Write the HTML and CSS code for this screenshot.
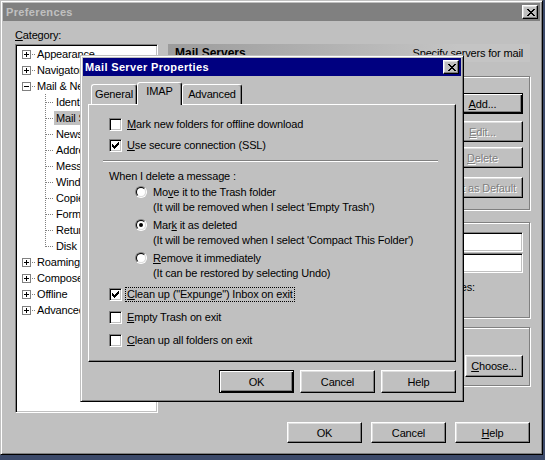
FILE: index.html
```html
<!DOCTYPE html>
<html>
<head>
<meta charset="utf-8">
<title>Preferences</title>
<link rel="stylesheet" href="styles.css">
</head>
<body>
<div class="prefs">
  <div class="titlebar inactive">
    <span class="title-text">Preferences</span>
    <span class="tbtn"><svg viewBox="0 0 8 7" shape-rendering="crispEdges"><path d="M0 0h2v1H0zM6 0h2v1H6zM1 1h2v1H1zM5 1h2v1H5zM2 2h4v1H2zM3 3h2v1H3zM2 4h4v1H2zM1 5h2v1H1zM5 5h2v1H5zM0 6h2v1H0zM6 6h2v1H6z" fill="#000"/></svg></span>
  </div>
  <div class="client">
    <div class="cat-label"><u>C</u>ategory:</div>
    <div class="main">
      <div class="tree">
        <div class="node"><svg class="exp" viewBox="0 0 9 9" shape-rendering="crispEdges"><rect x="0.5" y="0.5" width="8" height="8" fill="#fff" stroke="#808080"/><path d="M2 4h5v1H2zM4 2h1v5H4z" fill="#000"/></svg><span class="dash"></span><span class="tl">Appearance</span></div>
        <div class="node"><svg class="exp" viewBox="0 0 9 9" shape-rendering="crispEdges"><rect x="0.5" y="0.5" width="8" height="8" fill="#fff" stroke="#808080"/><path d="M2 4h5v1H2zM4 2h1v5H4z" fill="#000"/></svg><span class="dash"></span><span class="tl">Navigator</span></div>
        <div class="node"><svg class="exp" viewBox="0 0 9 9" shape-rendering="crispEdges"><rect x="0.5" y="0.5" width="8" height="8" fill="#fff" stroke="#808080"/><path d="M2 4h5v1H2z" fill="#000"/></svg><span class="dash"></span><span class="tl">Mail &amp; Newsgroups</span></div>
        <div class="child"><span class="cl">Identity</span></div>
        <div class="child"><span class="cl sel">Mail Servers</span></div>
        <div class="child"><span class="cl">Newsgroup Servers</span></div>
        <div class="child"><span class="cl">Addressing</span></div>
        <div class="child"><span class="cl">Messages</span></div>
        <div class="child"><span class="cl">Window Settings</span></div>
        <div class="child"><span class="cl">Copies &amp; Folders</span></div>
        <div class="child"><span class="cl">Formatting</span></div>
        <div class="child"><span class="cl">Return Receipts</span></div>
        <div class="child last"><span class="cl">Disk Space</span></div>
        <div class="node"><svg class="exp" viewBox="0 0 9 9" shape-rendering="crispEdges"><rect x="0.5" y="0.5" width="8" height="8" fill="#fff" stroke="#808080"/><path d="M2 4h5v1H2zM4 2h1v5H4z" fill="#000"/></svg><span class="dash"></span><span class="tl">Roaming User</span></div>
        <div class="node"><svg class="exp" viewBox="0 0 9 9" shape-rendering="crispEdges"><rect x="0.5" y="0.5" width="8" height="8" fill="#fff" stroke="#808080"/><path d="M2 4h5v1H2zM4 2h1v5H4z" fill="#000"/></svg><span class="dash"></span><span class="tl">Composer</span></div>
        <div class="node"><svg class="exp" viewBox="0 0 9 9" shape-rendering="crispEdges"><rect x="0.5" y="0.5" width="8" height="8" fill="#fff" stroke="#808080"/><path d="M2 4h5v1H2zM4 2h1v5H4z" fill="#000"/></svg><span class="dash"></span><span class="tl">Offline</span></div>
        <div class="node"><svg class="exp" viewBox="0 0 9 9" shape-rendering="crispEdges"><rect x="0.5" y="0.5" width="8" height="8" fill="#fff" stroke="#808080"/><path d="M2 4h5v1H2zM4 2h1v5H4z" fill="#000"/></svg><span class="dash"></span><span class="tl">Advanced</span></div>
      </div>
      <div class="right">
        <div class="hdr"><span class="hdr-title">Mail Servers</span><span class="hdr-desc">Specify servers for mail</span></div>
        <div class="group g1">
          <div class="btn def gb"><span><u>A</u>dd...</span></div>
          <div class="btn dis gb m7"><span><u>E</u>dit...</span></div>
          <div class="btn dis gb m5"><span><u>D</u>elete</span></div>
          <div class="btn dis gb m9"><span>Set as Default</span></div>
        </div>
        <div class="group g2">
          <div class="field"></div>
          <div class="field f2"></div>
          <div class="es">Outgoing server for all identities:</div>
        </div>
        <div class="group g3">
          <div class="btn choose"><span><u>C</u>hoose...</span></div>
        </div>
      </div>
    </div>
    <div class="footer">
      <div class="btn fb"><span>OK</span></div>
      <div class="btn fb"><span>Cancel</span></div>
      <div class="btn fb"><span><u>H</u>elp</span></div>
    </div>
  </div>
</div>

<div class="dlg">
  <div class="titlebar active">
    <span class="title-text">Mail Server Properties</span>
    <span class="tbtn"><svg viewBox="0 0 8 7" shape-rendering="crispEdges"><path d="M0 0h2v1H0zM6 0h2v1H6zM1 1h2v1H1zM5 1h2v1H5zM2 2h4v1H2zM3 3h2v1H3zM2 4h4v1H2zM1 5h2v1H1zM5 5h2v1H5zM0 6h2v1H0zM6 6h2v1H6z" fill="#000"/></svg></span>
  </div>
  <div class="dlg-body">
    <div class="tabs">
      <div class="tab t-gen">General</div>
      <div class="tab sel t-imap">IMAP</div>
      <div class="tab t-adv">Advanced</div>
    </div>
    <div class="panel">
      <div class="row"><span class="cb"></span><span class="lab"><u>M</u>ark new folders for offline download</span></div>
      <div class="row m5"><span class="cb"><svg viewBox="0 0 7 7" shape-rendering="crispEdges"><path d="M6 0h1v1H6zM5 1h2v1H5zM0 2h1v1H0zM4 2h3v1H4zM0 3h2v1H0zM3 3h3v1H3zM0 4h5v1H0zM1 5h3v1H1zM2 6h1v1H2z" fill="#000"/></svg></span><span class="lab"><u>U</u>se secure connection (SSL)</span></div>
      <div class="sep"></div>
      <div class="row when">When I delete a message :</div>
      <div class="ritem">
        <div class="row"><span class="radio"><span></span></span><span class="rlab">Mo<u>v</u>e it to the Trash folder</span></div>
        <div class="sub">(It will be removed when I select 'Empty Trash')</div>
      </div>
      <div class="ritem">
        <div class="row"><span class="radio"><span><i class="dot"></i></span></span><span class="rlab">Mar<u>k</u> it as deleted</span></div>
        <div class="sub">(It will be removed when I select 'Compact This Folder')</div>
      </div>
      <div class="ritem">
        <div class="row"><span class="radio"><span></span></span><span class="rlab"><u>R</u>emove it immediately</span></div>
        <div class="sub">(It can be restored by selecting Undo)</div>
      </div>
      <div class="row m5"><span class="cb"><svg viewBox="0 0 7 7" shape-rendering="crispEdges"><path d="M6 0h1v1H6zM5 1h2v1H5zM0 2h1v1H0zM4 2h3v1H4zM0 3h2v1H0zM3 3h3v1H3zM0 4h5v1H0zM1 5h3v1H1zM2 6h1v1H2z" fill="#000"/></svg></span><span class="lab focus"><u>C</u>lean up ("Expunge") Inbox on exit</span></div>
      <div class="row m7"><span class="cb"></span><span class="lab"><u>E</u>mpty Trash on exit</span></div>
      <div class="row m7"><span class="cb"></span><span class="lab"><u>C</u>lean up all folders on exit</span></div>
    </div>
    <div class="dlg-btns">
      <div class="btn def db"><span>OK</span></div>
      <div class="btn db"><span>Cancel</span></div>
      <div class="btn db"><span>Help</span></div>
    </div>
  </div>
</div>
</body>
</html>
```

FILE: styles.css
```css
* { box-sizing: border-box; }

body {
  margin: 0;
  width: 545px;
  height: 460px;
  overflow: hidden;
  position: relative;
  background: #3c4a6a;
  font-family: "Liberation Sans", Arial, sans-serif;
  font-size: 11px;
  letter-spacing: -0.16px;
  color: #000;
}

u { text-decoration: underline; text-underline-offset: 1px; }

/* ---------- window chrome ---------- */
.prefs, .dlg {
  background: #c0c0c0;
  border: 1px solid;
  border-color: #c0c0c0 #000 #000 #c0c0c0;
  box-shadow: inset 1px 1px 0 #fff, inset -1px -1px 0 #808080;
  padding: 2px;
  display: flex;
  flex-direction: column;
}

.prefs {
  width: 543px;
  height: 455px;
}

.titlebar {
  height: 18px;
  flex: none;
  display: flex;
  align-items: center;
  justify-content: space-between;
  padding: 0 2px 0 3px;
  font-weight: bold;
  line-height: 18px;
}
.title-text { letter-spacing: 0.35px; }
.titlebar.inactive { background: #808080; color: #c0c0c0; }
.titlebar.active { background: #000080; color: #fff; padding-left: 2px; }

.tbtn {
  width: 16px;
  height: 14px;
  background: #c0c0c0;
  border: 1px solid;
  border-color: #fff #000 #000 #fff;
  box-shadow: inset -1px -1px 0 #808080, inset 1px 1px 0 #dfdfdf;
  display: flex;
  align-items: center;
  justify-content: center;
  padding-left: 1px;
}
.tbtn svg { display: block; width: 8px; height: 7px; }

/* ---------- preferences client ---------- */
.client {
  flex: 1;
  display: flex;
  flex-direction: column;
  padding: 6px 0 0 12px;
}

.cat-label { height: 17px; line-height: 16px; }

.main {
  display: flex;
  gap: 10px;
  height: 369px;
}

.tree {
  width: 143px;
  flex: none;
  background: #fff;
  border: 1px solid;
  border-color: #808080 #fff #fff #808080;
  box-shadow: inset 1px 1px 0 #000, inset -1px -1px 0 #c0c0c0;
  padding: 1px 0 0 1px;
  overflow: hidden;
  white-space: nowrap;
}

.node {
  height: 16px;
  display: flex;
  align-items: center;
}
.exp { width: 9px; height: 9px; margin-left: 5px; flex: none; display: block; }
.dash {
  width: 4px;
  height: 1px;
  margin-right: 2px;
  flex: none;
  background: repeating-linear-gradient(to right, transparent 0 1px, #808080 1px 2px);
}

.child {
  height: 16px;
  display: flex;
  align-items: center;
  padding-left: 37px;
  background-image:
    repeating-linear-gradient(to bottom, #808080 0 1px, transparent 1px 2px),
    repeating-linear-gradient(to right, #808080 0 1px, transparent 1px 2px);
  background-size: 1px 100%, 8px 1px;
  background-position: 28px 0, 29px 8px;
  background-repeat: no-repeat;
}
.child.last { background-size: 1px 9px, 8px 1px; }
.cl { padding: 0 2px; line-height: 14px; }
.cl.sel { background: #c0c0c0; }

.right {
  width: 362px;
  flex: none;
  display: flex;
  flex-direction: column;
}

.hdr {
  height: 18px;
  flex: none;
  background: linear-gradient(to right, #9c9c9c, #c4c4c4 80%);
  display: flex;
  align-items: center;
  justify-content: space-between;
  padding: 0 7px 0 7px;
  white-space: nowrap;
}
.hdr-title { font-weight: bold; font-size: 12px; letter-spacing: 0; }

.group {
  border: 1px solid #808080;
  box-shadow: 1px 1px 0 #fff, inset 1px 1px 0 #fff;
  display: flex;
  flex-direction: column;
  align-items: flex-end;
  padding-right: 6px;
  flex: none;
}
.g1 { margin-top: 14px; height: 134px; padding-top: 16px; }
.g2 { margin-top: 12px; height: 96px; padding-top: 9px; }
.g3 { margin-top: 9px; height: 59px; padding-top: 27px; }

.field {
  width: 220px;
  height: 20px;
  background: #fff;
  border: 1px solid;
  border-color: #808080 #fff #fff #808080;
  box-shadow: inset 1px 1px 0 #000, inset -1px -1px 0 #c0c0c0;
}
.field.f2 { margin-top: 1px; }
.es { margin-top: 6px; margin-right: 48px; line-height: 16px; white-space: nowrap; }

/* ---------- buttons ---------- */
.btn {
  display: flex;
  align-items: center;
  justify-content: center;
  background: #c0c0c0;
  border: 1px solid;
  border-color: #fff #000 #000 #fff;
  box-shadow: inset -1px -1px 0 #808080, inset 1px 1px 0 #dfdfdf;
  line-height: 14px;
  white-space: nowrap;
  flex: none;
}
.btn.def {
  border-color: #000;
  box-shadow: inset 1px 1px 0 #fff, inset -1px -1px 0 #000, inset -2px -2px 0 #808080;
}
.btn.dis { color: #808080; text-shadow: 1px 1px 0 #fff; }

.gb { width: 81px; height: 21px; }
.m5 { margin-top: 5px; }
.m7 { margin-top: 7px; }
.m9 { margin-top: 9px; }
.choose { width: 58px; height: 22px; }

.footer {
  display: flex;
  justify-content: flex-end;
  gap: 9px;
  margin-top: 9px;
  padding-right: 10px;
}
.fb { width: 75px; height: 21px; }

/* ---------- dialog ---------- */
.dlg {
  position: absolute;
  left: 80px;
  top: 55px;
  width: 384px;
  height: 347px;
}

.dlg-body {
  flex: 1;
  display: flex;
  flex-direction: column;
  padding: 6px 5px 0 5px;
}

.tabs {
  height: 22px;
  display: flex;
  align-items: flex-end;
  padding-left: 3px;
}
.tab {
  height: 20px;
  border: 1px solid;
  border-bottom: none;
  border-color: #fff #000 #fff #fff;
  border-radius: 3px 3px 0 0;
  box-shadow: inset -1px 0 0 #808080;
  padding-top: 1px;
  line-height: 16px;
  text-align: center;
  background: #c0c0c0;
}
.tab.sel {
  height: 23px;
  margin-bottom: -1px;
  position: relative;
  z-index: 1;
  padding-top: 0;
}
.t-gen { width: 46px; }
.t-imap { width: 45px; }
.t-adv { width: 60px; }

.panel {
  height: 258px;
  border: 1px solid;
  border-color: #fff #000 #000 #fff;
  box-shadow: inset -1px -1px 0 #808080;
  padding: 11px 0 0 20px;
  display: flex;
  flex-direction: column;
}

.row {
  height: 16px;
  display: flex;
  align-items: center;
  white-space: nowrap;
  flex: none;
}
.cb {
  width: 13px;
  height: 13px;
  flex: none;
  background: #fff;
  border: 1px solid;
  border-color: #808080 #fff #fff #808080;
  box-shadow: inset 1px 1px 0 #000, inset -1px -1px 0 #c0c0c0;
  padding: 2px;
}
.cb svg { display: block; width: 7px; height: 7px; }
.lab {
  margin-left: 3px;
  padding: 0 1px;
  border: 1px solid transparent;
  line-height: 13px;
}
.lab.focus { border: 1px dotted #000; }

.sep {
  margin: 7px 0 0 -6px;
  width: 335px;
  height: 2px;
  border-top: 1px solid #808080;
  border-bottom: 1px solid #fff;
  flex: none;
}
.when { margin-top: 6px; }

.ritem { margin-left: 26px; flex: none; }
.ritem + .ritem { margin-top: 2px; }
.radio {
  width: 12px;
  height: 12px;
  flex: none;
  border-radius: 50%;
  border: 1px solid;
  border-color: #808080 #fff #fff #808080;
}
.radio > span {
  width: 10px;
  height: 10px;
  border-radius: 50%;
  border: 1px solid;
  border-color: #000 #dfdfdf #dfdfdf #000;
  background: #fff;
  display: flex;
  align-items: center;
  justify-content: center;
}
.dot { display: block; width: 4px; height: 4px; border-radius: 50%; background: #000; }
.rlab { margin-left: 6px; }
.sub { height: 15px; line-height: 15px; padding-left: 18px; white-space: nowrap; }

.dlg-btns {
  display: flex;
  justify-content: flex-end;
  gap: 6px;
  margin-top: 8px;
}
.db { width: 75px; height: 23px; }
```
